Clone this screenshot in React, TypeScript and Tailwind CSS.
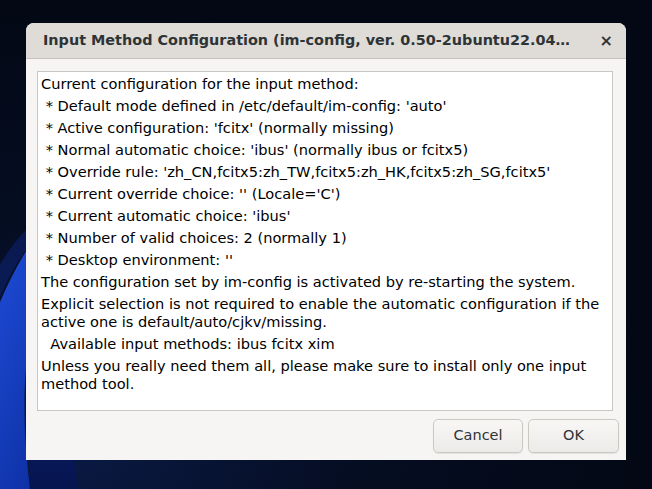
import React from 'react';

const lines: string[] = [
  'Current configuration for the input method:',
  ' * Default mode defined in /etc/default/im-config: \'auto\'',
  ' * Active configuration: \'fcitx\' (normally missing)',
  ' * Normal automatic choice: \'ibus\' (normally ibus or fcitx5)',
  ' * Override rule: \'zh_CN,fcitx5:zh_TW,fcitx5:zh_HK,fcitx5:zh_SG,fcitx5\'',
  ' * Current override choice: \'\' (Locale=\'C\')',
  ' * Current automatic choice: \'ibus\'',
  ' * Number of valid choices: 2 (normally 1)',
  ' * Desktop environment: \'\'',
  'The configuration set by im-config is activated by re-starting the system.',
  'Explicit selection is not required to enable the automatic configuration if the active one is default/auto/cjkv/missing.',
  '  Available input methods: ibus fcitx xim',
  'Unless you really need them all, please make sure to install only one input method tool.',
];

function Wallpaper() {
  return (
    <svg className="absolute inset-0" width="652" height="489" viewBox="0 0 652 489">
      <defs>
        <radialGradient id="bg" cx="0.1" cy="0.9" r="0.9">
          <stop offset="0" stopColor="#0a1a45" />
          <stop offset="0.5" stopColor="#050d22" />
          <stop offset="1" stopColor="#030814" />
        </radialGradient>
        <linearGradient id="b1" x1="0" y1="0" x2="1" y2="1">
          <stop offset="0" stopColor="#2456e8" />
          <stop offset="1" stopColor="#0a2a9a" />
        </linearGradient>
        <linearGradient id="b2" x1="0" y1="0" x2="0" y2="1">
          <stop offset="0" stopColor="#0d2380" />
          <stop offset="1" stopColor="#06154f" />
        </linearGradient>
      </defs>
      <rect width="652" height="489" fill="url(#bg)" />
      <path d="M-40 489 C -30 380 -10 300 40 230 L 60 250 C 20 320 20 410 30 489 Z" fill="url(#b1)" />
      <path d="M30 489 C 25 420 40 360 80 310 L 95 330 C 70 380 70 440 78 489 Z" fill="url(#b2)" />
      <path d="M-20 300 C 0 260 20 230 50 210 L 50 225 C 25 245 8 275 -5 310 Z" fill="#0b1d5c" opacity="0.8" />
    </svg>
  );
}

export default function App() {
  return (
    <div className="relative w-[652px] h-[489px] overflow-hidden bg-[#040a1a]" style={{ fontFamily: '"DejaVu Sans", sans-serif' }}>
      <Wallpaper />
      <div className="relative pt-[23px] pl-[26px]">
        <div className="w-[600px] h-[437px] flex flex-col bg-[#f6f5f4] rounded-t-[8px] overflow-hidden">
          {/* title bar */}
          <div className="h-[36px] shrink-0 flex items-center justify-between pl-[17px] pr-[13px] bg-[#dfdcd8] border-b border-[#c5c1bc]">
            <span className="text-[14.4px] font-bold text-[#2e3436] whitespace-nowrap">
              Input Method Configuration (im-config, ver. 0.50-2ubuntu22.04…
            </span>
            <span className="text-[16px] font-bold text-[#2e3436] leading-none">×</span>
          </div>

          <div className="flex-1 flex flex-col pt-[12px] pl-[11px] pr-[13px] pb-[7px]">
            <div className="h-[340px] bg-white border border-[#c9c5c0] pt-[3px] pl-[3px] pr-[6px] flex flex-col gap-[4px]">
              {lines.map((l, i) => (
                <div key={i} className="text-[14.6px] leading-[18px] text-black whitespace-pre-wrap">
                  {l}
                </div>
              ))}
            </div>

            <div className="mt-auto flex justify-end gap-[5px]">
              <button className="w-[90px] h-[34px] rounded-[5px] border border-[#cdc7c2] bg-gradient-to-b from-[#f8f7f6] to-[#edebe9] text-[14.5px] text-[#2e3436] shadow-[0_1px_1px_rgba(0,0,0,0.08)]">
                Cancel
              </button>
              <button className="w-[91px] h-[34px] mr-[-6px] rounded-[5px] border border-[#cdc7c2] bg-gradient-to-b from-[#f8f7f6] to-[#edebe9] text-[14.5px] text-[#2e3436] shadow-[0_1px_1px_rgba(0,0,0,0.08)]">
                OK
              </button>
            </div>
          </div>
        </div>
      </div>
    </div>
  );
}
